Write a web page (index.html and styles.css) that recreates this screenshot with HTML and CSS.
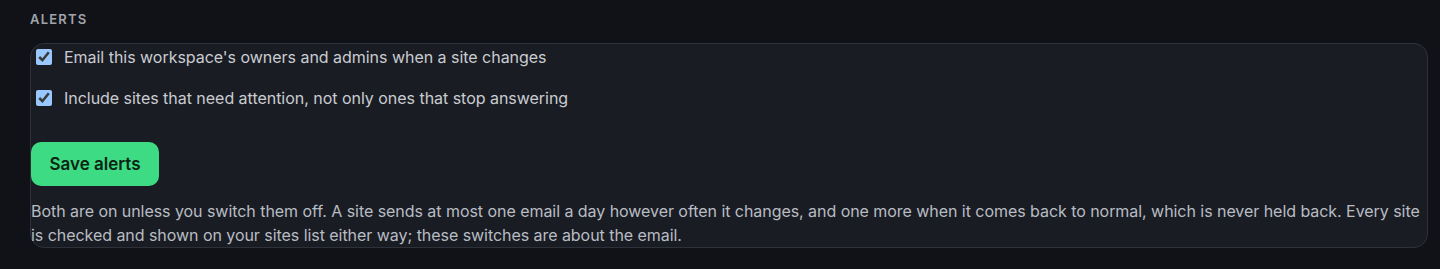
FILE: index.html
```html
<!DOCTYPE html>
<html lang="en">
<head>
    <meta charset="UTF-8">
    <meta name="viewport" content="width=device-width, initial-scale=1.0">
    <title>Alerts</title>
    <link rel="stylesheet" href="styles.css">
</head>
<body>

<!-- alert settings -->
<section class="settings">
    <h2 class="section-title">Alerts</h2>
    <form class="alerts-card" id="alerts-form">
        <label class="check-row">
            <input type="checkbox" name="notify_admins" checked>
            <span>Email this workspace's owners and admins when a site changes</span>
        </label>
        <label class="check-row">
            <input type="checkbox" name="include_attention" checked>
            <span>Include sites that need attention, not only ones that stop answering</span>
        </label>

        <button type="submit" class="save-btn">Save alerts</button>

        <p class="hint">Both are on unless you switch them off. A site sends at most one email a day however often it changes, and one more when it comes back to normal, which is never held back. Every site is checked and shown on your sites list either way; these switches are about the email.</p>
    </form>
</section>

</body>
</html>
```

FILE: styles.css
```css
:root {
    color-scheme: dark;
}

body {
    font-family: Inter, 'Noto Sans', sans-serif;
    margin: 0;
    padding: 0;
    background-color: #111217;
    color: #c9ccd1;
}

.settings {
    padding: 12px 12px 20px 30px;
}

.section-title {
    margin: 0 0 17px;
    font-size: 13px;
    font-weight: 600;
    letter-spacing: 1.2px;
    text-transform: uppercase;
    color: #a0a4ab;
    line-height: 14px;
}

.alerts-card {
    display: flex;
    flex-direction: column;
    align-items: flex-start;
    background-color: #1a1c23;
    border: 1px solid #2e3139;
    border-radius: 14px;
    margin: 0;
}

.check-row {
    display: flex;
    align-items: center;
    gap: 12px;
    height: 26px;
    font-size: 16px;
    line-height: 24px;
    letter-spacing: -0.03px;
    margin-bottom: 15px;
    cursor: pointer;
}

.check-row input {
    width: 16px;
    height: 16px;
    margin: 0 0 0 5px;
}

.save-btn {
    margin-top: 16px;
    background-color: #3ddc84;
    color: #0b2414;
    font-family: inherit;
    font-size: 17px;
    font-weight: 600;
    padding: 0 18px 0 18px;
    width: 128px;
    height: 44px;
    border: none;
    border-radius: 10px;
    cursor: pointer;
}

.save-btn:hover {
    background-color: #34c976;
}

.hint {
    margin: 13px 0 0;
    font-size: 16px;
    line-height: 24px;
    letter-spacing: -0.05px;
    color: #b8bcc3;
}
```
